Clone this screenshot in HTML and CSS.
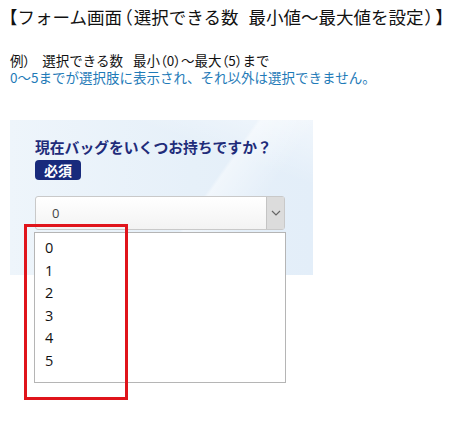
FILE: index.html
```html
<!DOCTYPE html>
<html lang="ja">
<head>
<meta charset="utf-8">
<link rel="stylesheet" href="styles.css">
</head>
<body>
<h1 class="title">【フォーム画面<span class="paren">（</span>選択できる数<span class="gap"></span>最小値～最大値を設定<span class="paren">）</span>】</h1>
<p class="example">例<span class="paren">）</span><span class="gap-s"></span>選択できる数<span class="gap"></span>最小<span class="paren">（</span>0<span class="paren">）</span>～最大<span class="paren">（</span>5<span class="paren">）</span>まで</p>
<p class="note">0～5までが選択肢に表示され、それ以外は選択できません。</p>
<div class="demo">
  <div class="panel">
    <div class="question">現在バッグをいくつお持ちですか？</div>
    <span class="badge">必須</span>
    <div class="select">
      <span class="select-value">0</span>
      <span class="select-btn">
        <svg width="10" height="6" viewBox="0 0 10 6"><path d="M1 1 L5 5 L9 1" fill="none" stroke="#666" stroke-width="1.2"/></svg>
      </span>
    </div>
  </div>
  <ul class="options">
    <li>0</li><li>1</li><li>2</li><li>3</li><li>4</li><li>5</li>
  </ul>
  <div class="highlight"></div>
</div>
</body>
</html>
```
FILE: styles.css
```css
html, body {
  margin: 0;
  padding: 0;
  background: #fff;
}
body {
  font-family: "Noto Sans CJK JP", "Noto Sans", sans-serif;
  color: #111;
}
.title {
  margin: 0;
  padding: 4px 0 0 0;
  font-size: 17.5px;
  font-weight: normal;
  line-height: 26px;
  white-space: nowrap;
}
.paren {
  font-feature-settings: "palt";
  padding: 0 1.5px;
}
.example .paren {
  padding: 0;
}
.gap {
  display: inline-block;
  width: 10px;
}
.gap-s {
  display: inline-block;
  width: 12px;
}
.example, .note {
  margin: 0;
  padding-left: 10px;
  font-size: 13.5px;
  line-height: 17px;
  white-space: nowrap;
}
.example {
  margin-top: 22px;
}
.note {
  color: #1f7bb8;
}
.demo {
  position: relative;
  margin: 34px 0 0 10px;
  width: 303px;
  height: 300px;
}
.panel {
  height: 155px;
  box-sizing: border-box;
  padding: 17px 0 0 25px;
  background:
    linear-gradient(125deg, rgba(255,255,255,0) 60%, rgba(255,255,255,0.45) 61%, rgba(255,255,255,0) 75%),
    linear-gradient(200deg, rgba(255,255,255,0.5) 0%, rgba(255,255,255,0) 25%),
    linear-gradient(90deg, #eef5fb 0%, #e6f0f9 60%, #e3eef9 100%);
}
.question {
  color: #1f2c7a;
  font-weight: bold;
  font-size: 14.8px;
  line-height: 20px;
  white-space: nowrap;
}
.badge {
  display: inline-block;
  margin-top: 3px;
  width: 46px;
  height: 20px;
  line-height: 20px;
  text-align: center;
  background: #182a7c;
  color: #fff;
  font-weight: bold;
  font-size: 14px;
  border-radius: 4px;
}
.select {
  display: flex;
  margin-top: 15px;
  width: 250px;
  height: 34px;
  box-sizing: border-box;
  border: 1px solid #c9c9c9;
  border-radius: 3px;
  background: linear-gradient(#ffffff, #f3f3f3);
}
.select-value {
  flex: 1;
  padding-left: 16px;
  font-family: "Open Sans", sans-serif;
  font-size: 13px;
  line-height: 33px;
  color: #444;
}
.select-btn {
  width: 17px;
  display: flex;
  align-items: center;
  justify-content: center;
  background: #dcdcdc;
  border-left: 1px solid #c4c4c4;
}
.options {
  position: absolute;
  left: 24px;
  top: 112px;
  width: 252px;
  height: 151px;
  box-sizing: border-box;
  margin: 0;
  padding: 4px 0 0 10px;
  list-style: none;
  background: #fff;
  border: 1px solid #b5b5b5;
}
.options li {
  font-family: "Open Sans", sans-serif;
  font-size: 14.5px;
  line-height: 22.6px;
  color: #111;
}
.highlight {
  position: absolute;
  left: 14px;
  top: 104px;
  width: 104px;
  height: 176px;
  box-sizing: border-box;
  border: 3px solid #e0141b;
}
```
